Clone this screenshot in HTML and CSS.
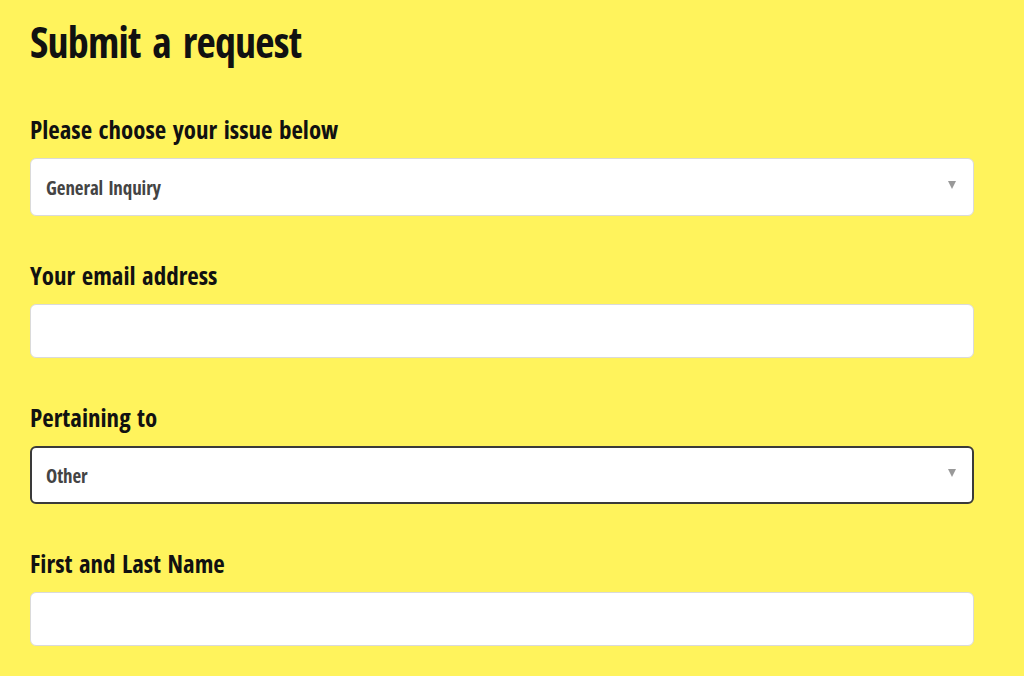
FILE: index.html
```html
<!DOCTYPE html>
<html lang="en">
<head>
    <meta charset="UTF-8">
    <meta name="viewport" content="width=device-width, initial-scale=1.0">
    <title>Submit a request</title>
    <link rel="stylesheet" href="styles.css">
</head>
<body>
    <main class="container">
        <h1 class="page-title">Submit a request</h1>

        <form class="request-form">
            <div class="form-field">
                <label class="field-label">Please choose your issue below</label>
                <div class="select-box">
                    <span class="select-value">General Inquiry</span>
                    <span class="select-arrow"></span>
                </div>
            </div>

            <div class="form-field">
                <label class="field-label" for="email">Your email address</label>
                <input class="text-input" id="email" type="text">
            </div>

            <div class="form-field">
                <label class="field-label">Pertaining to</label>
                <div class="select-box select-focus">
                    <span class="select-value">Other</span>
                    <span class="select-arrow"></span>
                </div>
            </div>

            <div class="form-field">
                <label class="field-label" for="name">First and Last Name</label>
                <input class="text-input" id="name" type="text">
            </div>
        </form>
    </main>
</body>
</html>
```

FILE: styles.css
```css
:root {
    --page-color: #fff35c;
    --text-color: #111111;
    --field-text: #444444;
    --border-color: #dadada;
}

* {
    margin: 0;
    padding: 0;
    box-sizing: border-box;
}

html, body {
    height: 676px;
    overflow: hidden;
}

body {
    font-family: "Open Sans", sans-serif;
    font-stretch: 75%;
    background-color: var(--page-color);
    color: var(--text-color);
}

.container {
    padding: 17px 50px 0 30px;
}

.page-title {
    font-size: 42px;
    line-height: 50px;
    font-weight: 700;
    letter-spacing: -0.8px;
    word-spacing: 5px;
    margin-bottom: 48px;
}

.form-field {
    margin-bottom: 45px;
}

.field-label {
    display: block;
    font-size: 25px;
    line-height: 28px;
    font-weight: 700;
    word-spacing: 2px;
    margin-bottom: 15px;
}

.select-box {
    height: 58px;
    display: flex;
    justify-content: space-between;
    align-items: center;
    padding: 0 17px 0 15px;
    background: white;
    border: 1px solid var(--border-color);
    border-radius: 6px;
    color: var(--field-text);
    font-size: 19px;
    font-weight: 700;
}

.select-value {
    padding-top: 2px;
    word-spacing: 2px;
    letter-spacing: -0.1px;
}

.select-focus {
    border: 2px solid #3a3a3a;
    padding-left: 14px;
    padding-right: 16px;
}

.select-arrow {
    width: 0;
    height: 0;
    margin-top: -4px;
    border-left: 4.5px solid transparent;
    border-right: 4.5px solid transparent;
    border-top: 8px solid #999999;
}

.text-input {
    display: block;
    width: 100%;
    height: 54px;
    background: white;
    border: 1px solid var(--border-color);
    border-radius: 6px;
}
```
